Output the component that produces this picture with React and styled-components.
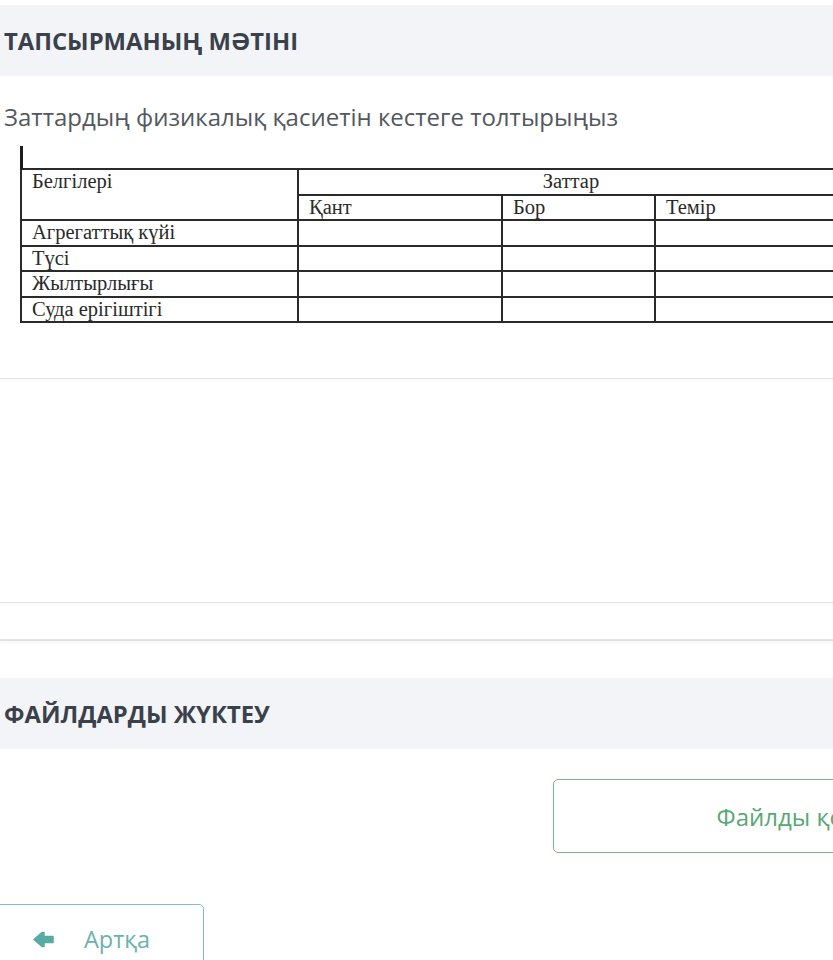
import React from 'react';
import styled, { createGlobalStyle } from 'styled-components';

const GlobalStyle = createGlobalStyle`
  html, body {
    margin: 0;
    padding: 0;
    background: #ffffff;
    overflow: hidden;
  }
  body {
    font-family: 'Open Sans', 'Noto Sans', sans-serif;
  }
`;

const Viewport = styled.div`
  width: 833px;
  height: 960px;
  overflow: hidden;
`;

const Page = styled.div`
  width: 1040px;
  padding-top: 5px;
`;

const SectionHeader = styled.div`
  height: 71px;
  display: flex;
  align-items: center;
  padding-left: 4px;
  background: #f3f4f7;
  color: #3a414b;
  font-size: 23.8px;
  font-weight: 700;
`;

const TaskText = styled.p`
  margin: 26px 0 0 4px;
  font-size: 24px;
  line-height: 30px;
  color: #53585e;
`;

const TableWrap = styled.div`
  margin: 14px 0 0 20px;
  position: relative;
  padding-top: 22px;
  &:before {
    content: '';
    position: absolute;
    left: 0;
    top: 0;
    width: 2.5px;
    height: 23px;
    background: #1d1d1d;
  }
`;

const Table = styled.table`
  border-collapse: collapse;
  font-family: 'Liberation Serif', 'DejaVu Serif', serif;
  font-size: 20.5px;
  color: #2a2a2a;
  table-layout: fixed;
  width: 815px;
`;

const Cell = styled.td`
  border: 2px solid #2a2a2a;
  height: 23.5px;
  padding: 0 0 0 10px;
  line-height: 22px;
  vertical-align: top;
  text-align: ${p => (p.$center ? 'center' : 'left')};
  white-space: nowrap;
  overflow: hidden;
`;

const Divider = styled.div`
  height: ${p => p.$w || 1}px;
  background: #e2e2e2;
  margin-top: ${p => p.$top}px;
  box-shadow: 0 2px 2px #f7f7f7;
`;

const UploadRow = styled.div`
  display: flex;
  padding: 30px 0 0 553px;
`;

const UploadButton = styled.button`
  width: 478px;
  height: 74px;
  border: 1px solid #78b48c;
  border-radius: 5px;
  background: #ffffff;
  color: #5aa774;
  font-family: 'Open Sans', 'Noto Sans', sans-serif;
  font-size: 24px;
  text-align: center;
`;

const BackRow = styled.div`
  display: flex;
  padding-top: 51px;
  margin-left: -10px;
`;

const BackButton = styled.button`
  width: 214px;
  height: 70px;
  display: flex;
  align-items: center;
  gap: 30px;
  padding: 0 0 0 42px;
  border: 1px solid #82bdb8;
  border-radius: 5px;
  background: #ffffff;
  color: #6ab2ad;
  font-family: 'Open Sans', 'Noto Sans', sans-serif;
  font-size: 23.5px;
`;

const ArrowIcon = () => (
  <svg width="21" height="17" viewBox="0 0 21 17">
    <polygon
      points="1,8.5 9,1.5 11,1.5 11,5.5 20,5.5 20,11.5 11,11.5 11,15.5 9,15.5"
      fill="#58aaa4"
      stroke="#58aaa4"
      strokeWidth="1.5"
      strokeLinejoin="round"
    />
  </svg>
);

const rows = ['Агрегаттық күйі', 'Түсі', 'Жылтырлығы', 'Суда ерігіштігі'];

export default function App() {
  return (
    <Viewport>
      <GlobalStyle />
      <Page>
        <SectionHeader>ТАПСЫРМАНЫҢ МӘТІНІ</SectionHeader>
        <TaskText>Заттардың физикалық қасиетін кестеге толтырыңыз</TaskText>
        <TableWrap>
          <Table>
            <colgroup>
              <col style={{ width: 277 }} />
              <col style={{ width: 204 }} />
              <col style={{ width: 153 }} />
              <col />
            </colgroup>
            <tbody>
              <tr>
                <Cell rowSpan={2}>Белгілері</Cell>
                <Cell colSpan={3} $center>Заттар</Cell>
              </tr>
              <tr>
                <Cell>Қант</Cell>
                <Cell>Бор</Cell>
                <Cell>Темір</Cell>
              </tr>
              {rows.map(r => (
                <tr key={r}>
                  <Cell>{r}</Cell>
                  <Cell />
                  <Cell />
                  <Cell />
                </tr>
              ))}
            </tbody>
          </Table>
        </TableWrap>
        <Divider $top={55} />
        <Divider $top={223} />
        <Divider $top={36} $w={2} />
        <div style={{ height: 37 }} />
        <SectionHeader>ФАЙЛДАРДЫ ЖҮКТЕУ</SectionHeader>
        <UploadRow>
          <UploadButton>Файлды қосу</UploadButton>
        </UploadRow>
        <BackRow>
          <BackButton>
            <ArrowIcon />
            Артқа
          </BackButton>
        </BackRow>
      </Page>
    </Viewport>
  );
}
